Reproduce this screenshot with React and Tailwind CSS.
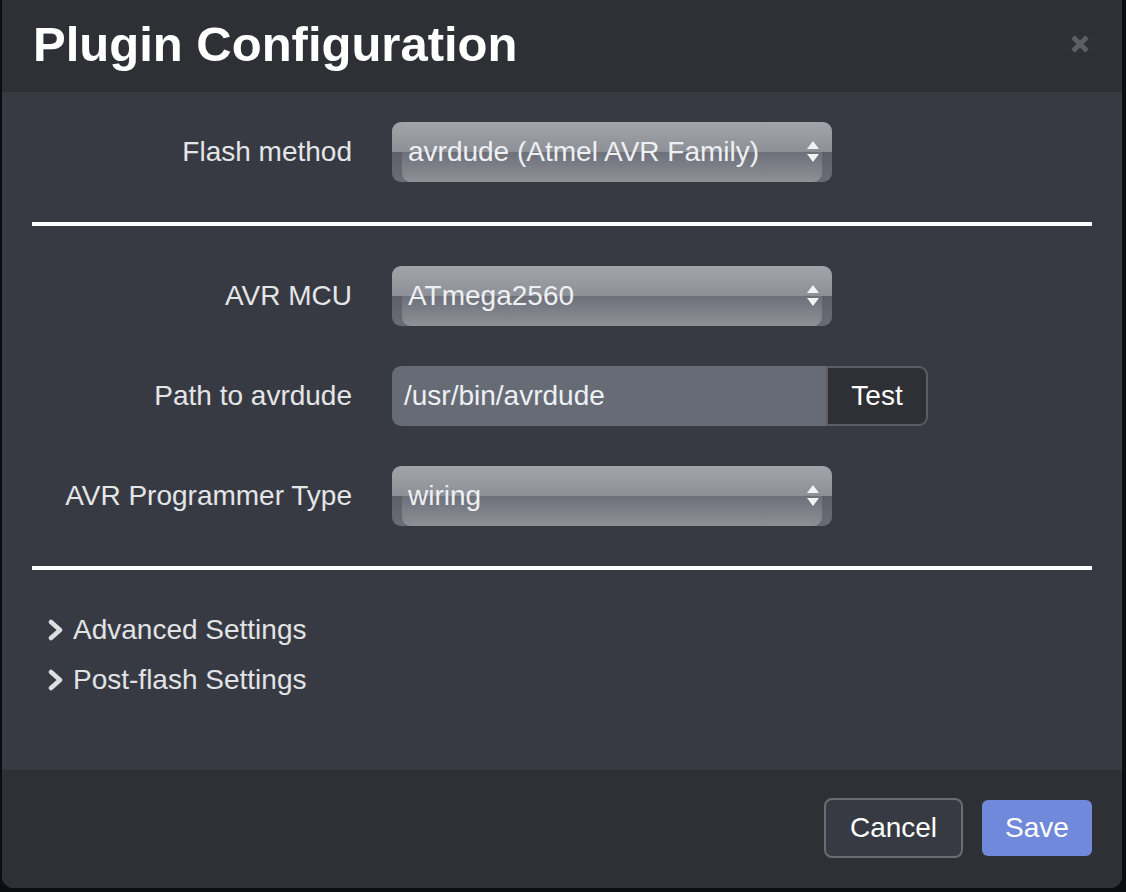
import React from 'react';

function Arrows() {
  return (
    <svg width="14" height="24" viewBox="0 0 14 24" className="shrink-0">
      <path d="M7 1 L13 9 L1 9 Z" fill="#f1f2f4" />
      <path d="M1 14 L13 14 L7 22 Z" fill="#f1f2f4" />
    </svg>
  );
}

function Select({ value }) {
  return (
    <div className="relative h-[60px] w-[440px] rounded-[9px] overflow-hidden bg-[linear-gradient(to_bottom,#a2a4a9_0%,#8d9096_50%,#5d6069_50%,#6a6d76_100%)]">
      <div className="absolute left-[10px] right-[10px] top-1/2 bottom-0 rounded-b-[9px] bg-[linear-gradient(to_bottom,#6d7079_0%,#8e9097_100%)]" />
      <div className="relative flex h-full items-center justify-between pl-[16px] pr-[12px]">
        <span className="text-[28px] text-[#eef0f3] leading-none">{value}</span>
        <Arrows />
      </div>
    </div>
  );
}

function Row({ label, children }) {
  return (
    <div className="flex items-center">
      <div className="w-[320px] text-right text-[28px] text-[#e4e5e7]">{label}</div>
      <div className="ml-[40px]">{children}</div>
    </div>
  );
}

function Chevron() {
  return (
    <svg width="16" height="22" viewBox="0 0 16 22" className="shrink-0">
      <path d="M3 3 L12 11 L3 19" fill="none" stroke="#dedfe1" strokeWidth="4.5" strokeLinecap="round" strokeLinejoin="round" />
    </svg>
  );
}

export default function App() {
  return (
    <div className="min-h-[892px] bg-[#0c0d11] font-['Liberation_Sans',Arial,sans-serif]">
      <div className="ml-[2px] w-[1120px] rounded-b-[12px] overflow-hidden bg-[#373a43]">
        <div className="flex h-[92px] items-center justify-between bg-[#2f3036] pl-[31px] pr-[32px]">
          <h3 className="text-[49px] font-bold text-white leading-none -mt-[4px]">Plugin Configuration</h3>
          <svg width="20" height="20" viewBox="0 0 20 20" className="-mt-[4px]">
            <path d="M3 3 L17 17 M17 3 L3 17" stroke="#5d5e63" strokeWidth="5" />
          </svg>
        </div>

        <div className="px-[30px] pt-[30px] pb-[70px]">
          <Row label="Flash method">
            <Select value="avrdude (Atmel AVR Family)" />
          </Row>

          <div className="my-[40px] h-[4px] bg-white" />

          <div className="flex flex-col gap-[40px]">
            <Row label="AVR MCU">
              <Select value="ATmega2560" />
            </Row>
            <Row label="Path to avrdude">
              <div className="flex h-[60px]">
                <div className="flex w-[434px] items-center rounded-l-[9px] bg-[#676b76] pl-[12px] text-[28px] text-[#eef0f3]">
                  /usr/bin/avrdude
                </div>
                <button className="h-[60px] w-[102px] rounded-r-[9px] border-2 border-[#5b5d63] bg-[#2f3036] text-[28px] text-white">
                  Test
                </button>
              </div>
            </Row>
            <Row label="AVR Programmer Type">
              <Select value="wiring" />
            </Row>
          </div>

          <div className="mt-[40px] h-[4px] bg-white" />

          <div className="mt-[40px] flex flex-col gap-[10px] pl-[16px]">
            <div className="flex h-[40px] items-center gap-[9px] text-[28px] text-[#e2e3e5]">
              <Chevron />
              <span>Advanced Settings</span>
            </div>
            <div className="flex h-[40px] items-center gap-[9px] text-[28px] text-[#e2e3e5]">
              <Chevron />
              <span>Post-flash Settings</span>
            </div>
          </div>
        </div>

        <div className="flex h-[118px] items-start justify-end gap-[19px] bg-[#2f3036] pr-[30px] pt-[28px]">
          <button className="h-[60px] w-[139px] rounded-[8px] border-2 border-[#6b6c70] bg-[#373a43] text-[28px] text-white">
            Cancel
          </button>
          <button className="mt-[2px] h-[56px] w-[110px] rounded-[6px] bg-[#7189da] text-[28px] text-white">
            Save
          </button>
        </div>
      </div>
    </div>
  );
}
